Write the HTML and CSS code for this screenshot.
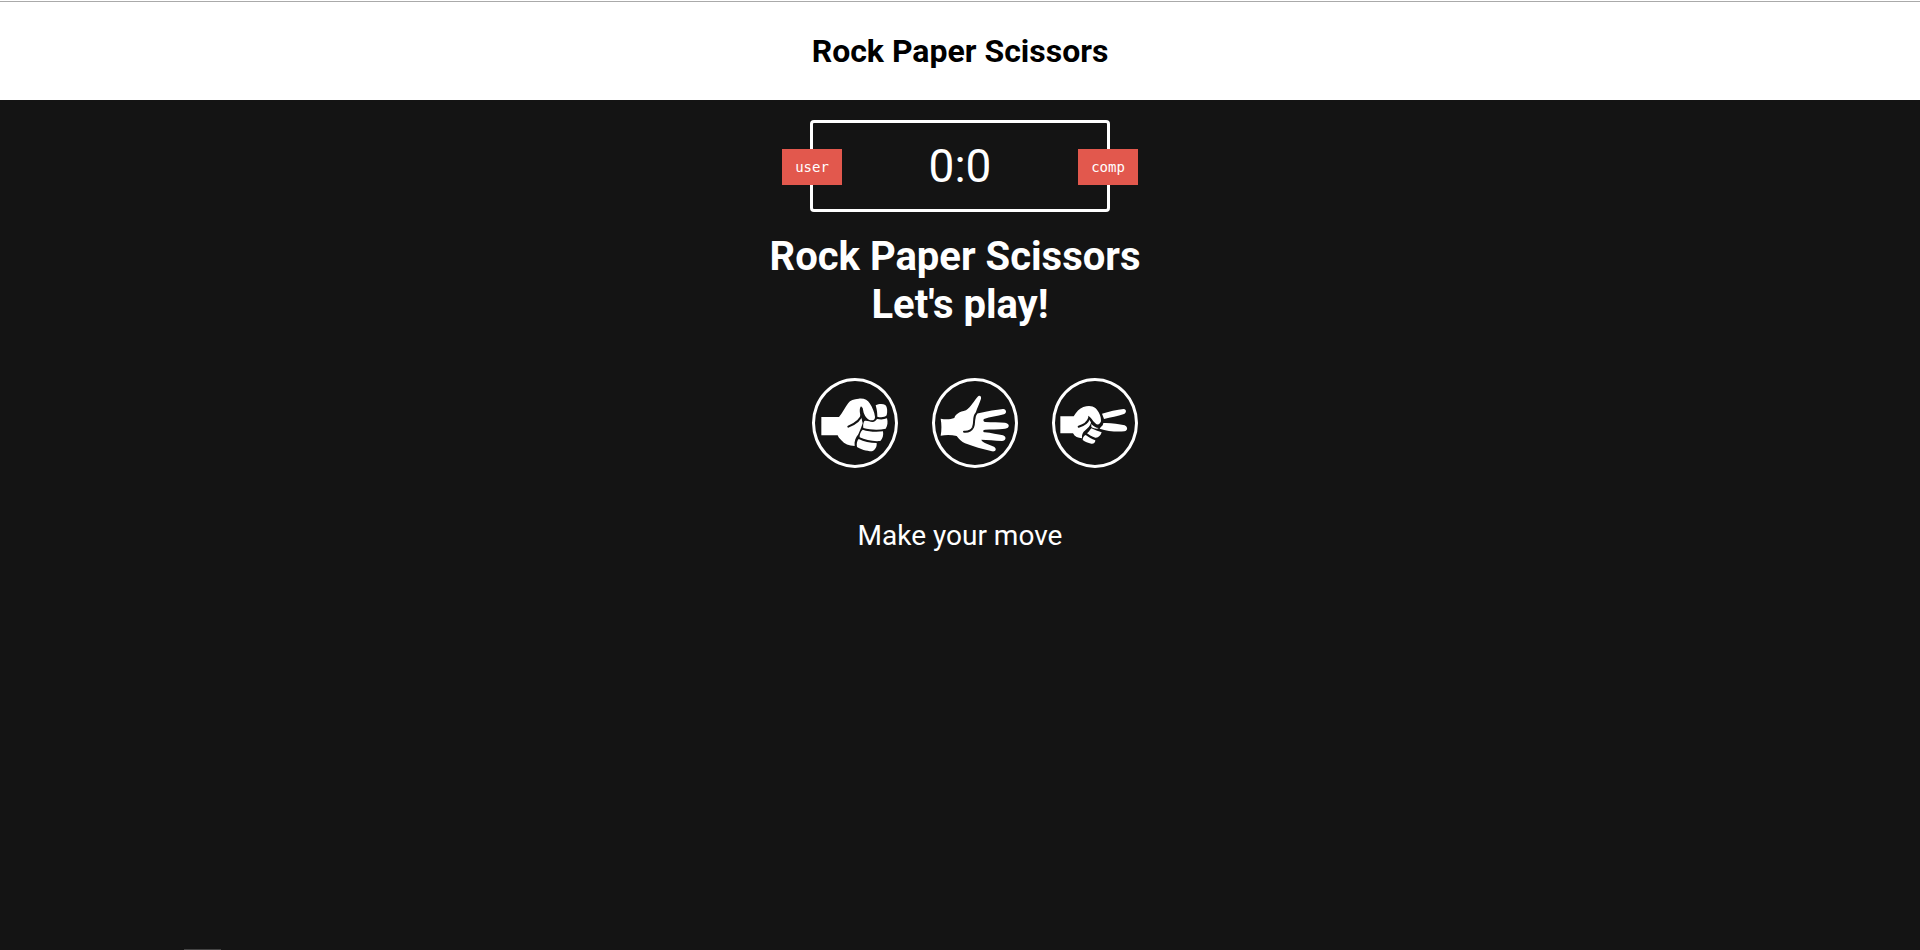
FILE: index.html
```html
<!DOCTYPE html>
<html lang="en">
<head>
  <meta charset="utf-8">
  <title>Rock Paper Scissors</title>
  <link rel="stylesheet" href="styles.css">
</head>
<body>
  <header class="header">
    <h1 class="header-title">Rock Paper Scissors</h1>
  </header>
  <main class="game">
    <div class="scoreboard">
      <span class="badge badge-user">user</span>
      <span class="score">0:0</span>
      <span class="badge badge-comp">comp</span>
    </div>
    <h2 class="result">Rock Paper Scissors&nbsp;<br>Let's play!</h2>
    <div class="choices">
      <button class="choice" type="button" aria-label="Rock">
        <svg class="hand" viewBox="30 33 240 252" aria-hidden="true">
          <path class="fill" d="M49 141H102C112 129 121 111 130 99C135 91 147 87 161 86C177 84 188 90 194 100C202 112 208 126 210 140C211 147 206 151 200 151C188 150 181 141 176 128L173 114L168 109C162 116 164 132 170 146L173 160L168 174L160 193C152 203 147 214 149 228C132 228 118 222 109 211C103 205 100 201 98 196H49Z"/>
          <path class="fill" d="M212 106C221 101 233 100 241 105C247 111 248 123 245 136C238 143 226 143 217 140C217 129 216 120 212 106Z"/>
          <path class="fill" d="M178 153C187 151 194 156 202 156C209 156 213 151 216 147C226 149 237 149 246 145C249 156 248 168 242 176C222 181 197 180 175 174C174 167 174 160 178 153Z"/>
          <path class="fill" d="M173 179C191 185 212 187 234 184C236 195 233 207 226 213C205 215 180 210 164 202C163 193 167 185 173 179Z"/>
          <path class="fill" d="M161 207C176 215 195 219 215 219C216 230 211 240 201 244C184 243 166 238 156 231C154 221 156 213 161 207Z"/>
          <path class="line" d="M171 132C168 148 154 160 130 170"/>
        </svg>
      </button>
      <button class="choice" type="button" aria-label="Paper">
        <svg class="hand" viewBox="30 33 240 252" aria-hidden="true">
          <path class="fill" d="M47 146C61 149 76 149 88 144C92 132 103 126 123 121C137 111 148 92 158 80C163 74 170 79 168 86C164 99 157 113 152 128C153 131 158 131 164 129C187 124 214 119 234 117C244 116 247 130 237 133C217 138 195 141 177 147C174 150 175 155 180 156C202 157 222 157 240 158C255 160 255 174 240 176C218 178 197 178 180 179C173 180 173 185 179 187C199 189 218 193 234 196C246 200 243 213 231 213C209 212 187 209 169 209C170 214 178 218 185 221L207 230C216 235 213 246 201 244C173 238 145 230 120 220C110 215 102 208 95 198C80 194 62 194 47 197C50 180 50 163 47 146Z"/>
          <path class="line" d="M154 130C143 141 151 155 144 172C139 182 130 186 117 185"/>
        </svg>
      </button>
      <button class="choice" type="button" aria-label="Scissors">
        <svg class="hand" viewBox="30 33 240 252" aria-hidden="true">
          <path class="fill" d="M46 139H86C94 126 103 115 115 111C129 106 143 107 151 114C161 123 169 139 168 154C165 163 158 167 151 160C142 151 138 142 130 137C128 142 133 149 138 157C137 168 127 175 121 181C113 186 110 195 111 205C99 204 89 200 84 190H46Z"/>
          <path class="fill" d="M171 131C191 125 216 119 236 117C245 117 245 129 237 132C218 139 197 142 177 147C175 141 173 136 171 131Z"/>
          <path class="fill" d="M175 159C197 158 221 162 239 166C249 170 249 183 238 184C215 186 187 184 164 176C167 170 174 169 175 159Z"/>
          <path class="fill" d="M139 175C149 180 160 184 170 187C167 197 160 204 151 203C141 201 133 195 126 190C131 186 135 180 139 175Z"/>
          <path class="fill" d="M122 195C131 201 140 207 151 211C151 218 146 222 139 221C129 219 120 215 113 210C113 203 116 198 122 195Z"/>
          <path class="line" d="M132 145C128 158 118 165 101 170"/>
          <path class="fill" d="M139 162C145 169 153 174 161 174C157 179 146 175 139 171Z"/>
        </svg>
      </button>
    </div>
    <p class="hint">Make your move</p>
  </main>
</body>
</html>
```
FILE: styles.css
```css
* {
  box-sizing: border-box;
  margin: 0;
  padding: 0;
}

body {
  min-height: 100vh;
  display: flex;
  flex-direction: column;
  padding-top: 1px;
  background: #fff;
  font-family: Roboto, sans-serif;
}

.header {
  border-top: 1px solid #aaa;
  padding: 30px 20px;
  text-align: center;
}

.header-title {
  color: #000;
  font-size: 32px;
  font-weight: 700;
  line-height: 38px;
}

.game {
  flex: 1;
  display: flex;
  flex-direction: column;
  align-items: center;
  padding: 20px;
  background: #141414;
  color: #fff;
}

/* Thin tab peeking over the bottom edge of the window */
.game::after {
  content: "";
  position: fixed;
  bottom: 0;
  left: 184px;
  width: 37px;
  height: 1px;
  background: #444;
}

.scoreboard {
  position: relative;
  width: 300px;
  padding: 15px 20px;
  border: 3px solid #fff;
  border-radius: 4px;
  text-align: center;
}

.score {
  display: block;
  font-size: 46px;
  line-height: 56px;
}

.badge {
  position: absolute;
  top: 26px;
  width: 60px;
  background: #e2584d;
  font-family: "DejaVu Sans Mono", monospace;
  font-size: 14px;
  line-height: 36px;
}

.badge-user {
  left: -31px;
}

.badge-comp {
  right: -31px;
}

.result {
  margin-top: 21px;
  font-size: 40px;
  font-weight: 700;
  line-height: 48px;
  text-align: center;
}

.choices {
  display: flex;
  gap: 34px;
  margin-top: 49px;
  padding-left: 30px;
}

.choice {
  border: 3px solid #fff;
  border-radius: 50%;
  background: none;
  cursor: pointer;
}

.hand {
  display: block;
  width: 80px;
  height: 84px;
}

.fill {
  fill: #fff;
}

.line {
  fill: none;
  stroke: #141414;
  stroke-width: 6;
  stroke-linecap: round;
}

.hint {
  margin-top: 50px;
  font-size: 28px;
  line-height: 36px;
}
```
